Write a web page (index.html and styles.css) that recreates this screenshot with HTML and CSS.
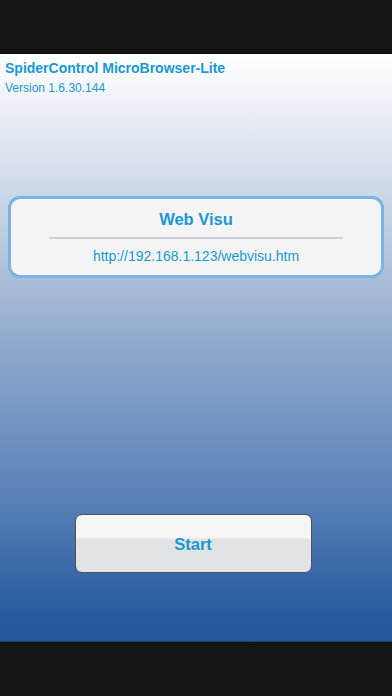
FILE: index.html
```html
<!DOCTYPE html>
<html lang="en">

<head>
    <meta charset="UTF-8">
    <meta name="viewport" content="width=device-width, initial-scale=1.0">
    <title>MicroBrowser-Lite</title>

    <link rel="stylesheet" href="styles.css">

</head>

<body>
    <div class="topBar"></div>
    <div class="screen">
        <div class="header">
            <h1 class="appName">SpiderControl MicroBrowser-Lite</h1>
            <p class="version">Version 1.6.30.144</p>
        </div>
        <div class="card">
            <h2 class="cardTitle">Web Visu</h2>
            <div class="divider"></div>
            <p class="url">http://192.168.1.123/webvisu.htm</p>
        </div>
        <div class="startWrap">
            <button class="startBtn">Start</button>
        </div>
    </div>
    <div class="bottomBar"></div>
</body>

</html>
```

FILE: styles.css
```css
body {
    margin: 0;
    width: 392px;
    height: 696px;
    background: #151515;
    font-family: "Liberation Sans", Arial, sans-serif;
    display: flex;
    flex-direction: column;
}

.topBar {
    height: 53px;
    background: #151515;
    border-bottom: 1px solid #0a0a0a;
}

.bottomBar {
    flex: 1;
    background: #151515;
    border-top: 1px solid #183f6e;
}

.screen {
    height: 587px;
    background: linear-gradient(#ffffff 0%, #e6ebf3 12%, #c3d1e4 28%, #8ea8cc 50%, #5a82b8 75%, #2a5e9f 94%, #22599b 100%);
    display: flex;
    flex-direction: column;
}

.header {
    padding: 6px 5px 0;
}

.appName {
    margin: 0;
    font-size: 14px;
    font-weight: bold;
    color: #1a98d2;
    line-height: 17px;
}

.version {
    margin: 4px 0 0;
    font-size: 12px;
    color: #1a98d2;
    line-height: 15px;
}

.card {
    margin: 100px 8px 0;
    height: 76px;
    background: #f4f4f4;
    border: 3px solid #78b4e6;
    border-radius: 12px;
    text-align: center;
}

.cardTitle {
    margin: 10px 0 0;
    font-size: 16.5px;
    font-weight: bold;
    color: #1a98d2;
    line-height: 20px;
}

.divider {
    margin: 8px 38px 0;
    height: 2px;
    background: #ccd1d8;
}

.url {
    margin: 9px 0 0;
    font-size: 14px;
    color: #1a98d2;
    line-height: 16px;
}

.startWrap {
    margin-top: 236px;
    padding-right: 6px;
    display: flex;
    justify-content: center;
}

.startBtn {
    width: 237px;
    height: 59px;
    border: 1px solid #4a5260;
    border-radius: 7px;
    background: linear-gradient(#f5f5f5 0%, #f5f5f5 40%, #e2e3e5 42%, #e2e3e5 100%);
    font-family: "Liberation Sans", Arial, sans-serif;
    font-size: 16.5px;
    font-weight: bold;
    color: #1a98d2;
    padding: 2px 0 0;
}
```
